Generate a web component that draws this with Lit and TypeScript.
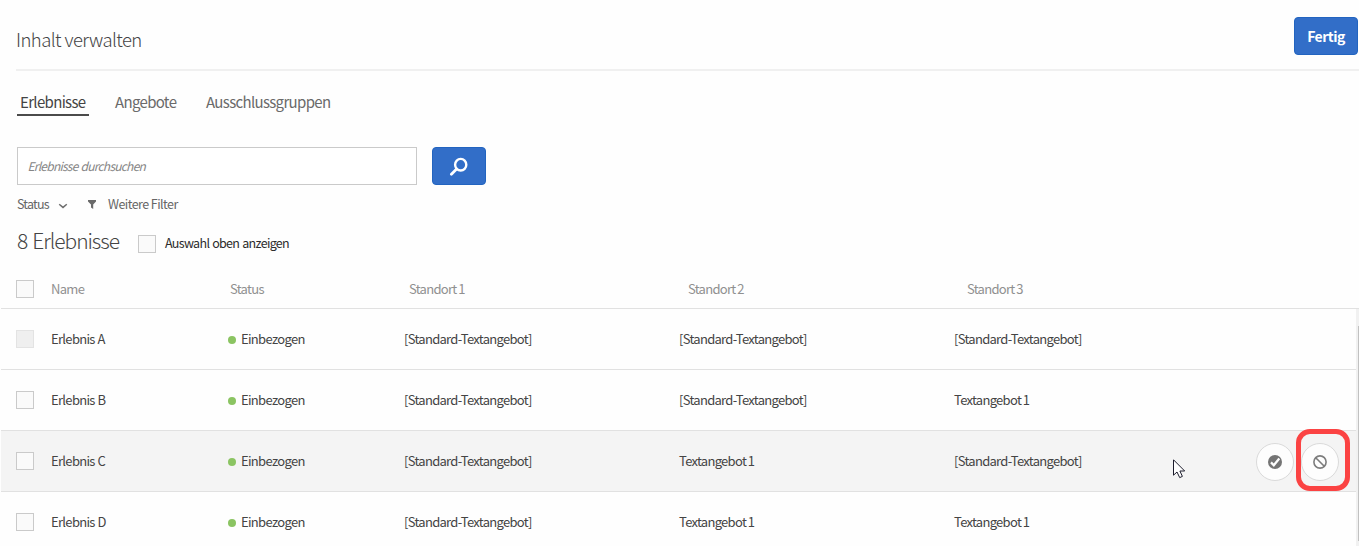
import { LitElement, html, css, svg } from "lit";
import { customElement } from "lit/decorators.js";
import { classMap } from "lit/directives/class-map.js";

interface Row {
  name: string;
  offers: string[];
  locked?: boolean;
  hovered?: boolean;
}

const STD = "[Standard-Textangebot]";
const T1 = "Textangebot 1";

const ROWS: Row[] = [
  { name: "Erlebnis A", offers: [STD, STD, STD], locked: true },
  { name: "Erlebnis B", offers: [STD, STD, T1] },
  { name: "Erlebnis C", offers: [STD, T1, STD], hovered: true },
  { name: "Erlebnis D", offers: [STD, T1, T1] },
];

const searchIcon = svg`<svg class="search-icon" width="20" height="20" viewBox="0 0 20 20">
  <ellipse cx="11.7" cy="8.7" rx="5.6" ry="5.8" fill="none" stroke="#fff" stroke-width="2.4"/>
  <path d="M7.6 13 L2.4 18.2" stroke="#fff" stroke-width="2.8" stroke-linecap="round"/>
</svg>`;

@customElement("app-root")
export class AppRoot extends LitElement {
  static styles = css`
    :host {
      display: block;
      position: relative;
      box-sizing: border-box;
      height: 546px;
      overflow: hidden;
      background: #fefefe;
      color: #444;
      font-family: "Noto Sans CJK JP", "Noto Sans", sans-serif;
      font-size: 13px;
      line-height: 20px;
      white-space: nowrap;
    }
    * { box-sizing: border-box; }
    .header {
      display: flex;
      justify-content: space-between;
      height: 71px;
      margin-left: 16px;
      padding: 17px 1px 0 0;
      border-bottom: 2px solid #f0f0f0;
    }
    .title { font-size: 18.5px; font-weight: 300; line-height: 24px; margin: 10px 0 0; letter-spacing: -0.57px; }
    .done {
      width: 64px; height: 38px; padding: 0; border: 1px solid #2264c0; border-radius: 4px;
      background: #326ec8; color: #fff; font: 700 14px/34px "Noto Sans CJK JP", sans-serif; letter-spacing: -0.5px;
    }
    .tabs { display: flex; padding: 21px 0 0 17px; height: 76px; font-size: 15px; line-height: 20px; color: #6a6a6a; }
    .tab { height: 24px; }
    .tab.active { width: 72px; padding-left: 3px; margin-right: 26px; border-bottom: 2px solid #4b4b4b; color: #444; }
    .tab.offers { width: 91px; }
    .tab span { letter-spacing: -0.67px; }
    .search { display: flex; gap: 15px; padding-left: 17px; }
    .field {
      width: 400px; height: 38px; border: 1px solid #cacaca; background: #fff; padding-left: 9.5px;
      line-height: 35px; font-size: 12px; font-style: italic; color: #858585; letter-spacing: -0.76px; word-spacing: 1px;
    }
    .go {
      display: grid; place-items: center; width: 54px; height: 38px; padding: 0;
      border: 1px solid #2264c0; border-radius: 4px; background: #326ec8;
    }
    .filters { display: flex; align-items: center; height: 20px; margin: 9px 0 0 17px; font-size: 12.5px; letter-spacing: -0.55px; color: #666; }
    .filters .lbl { width: 41px; letter-spacing: -0.8px; }
    .chev { width: 10px; margin: 4px 20px 0 0; }
    .funnel { width: 8px; margin-right: 12px; }
    .summary { display: flex; align-items: center; height: 36px; margin: 11px 0 0 17px; }
    .count { width: 121px; font-size: 21px; font-weight: 300; line-height: 28px; margin: -6px 0 0; letter-spacing: -1.05px; word-spacing: 1.5px; }
    .check { flex: none; width: 18px; height: 18px; border: 1px solid #cacaca; background: #fafafa; }
    .summary .check { margin-top: 2px; }
    .check.locked { border-color: #e3e3e3; background: #efefef; }
    .show { margin-left: 9px; font-size: 12.5px; color: #2c2c2c; letter-spacing: -0.68px; word-spacing: 0.8px; }
    .grid { display: grid; align-items: center; }
    .thead { height: 48px; border-bottom: 1px solid #e1e1e1; margin-left: 1px; }
    .head { grid-template-columns: 35px 179px 179px 279px 279px 1fr; height: 47px; padding: 9px 0 0 15px; color: #909090; }
    .body { display: flex; }
    .rows { width: 1355px; margin-left: 1px; flex: none; }
    .row { grid-template-columns: 35px 177px 176px 275px 275px 275px 1fr; height: 61px; padding-left: 15px; border-bottom: 1px solid #e1e1e1; }
    .row.hovered { background: #f4f4f4; }
    .status { display: flex; align-items: center; gap: 5px; }
    .dot { width: 8px; height: 8px; border-radius: 50%; background: #8bc462; margin-top: 2px; }
    .actions { display: flex; justify-content: flex-end; gap: 7px; padding: 2px 17px 0 0; }
    .action { flex: none; display: grid; place-items: center; width: 38px; height: 38px; border-radius: 50%; border: 1px solid #dadada; background: #fdfdfd; }
    .track { width: 3px; height: 237px; background: #f1f1f1; padding: 17px 0 0 2px; }
    .thumb { height: 215px; background: #c1c1c1; }
    .marker { position: absolute; left: 1296px; top: 429px; width: 54px; height: 62px; border: 5px solid #fb4343; border-radius: 14px; }
    .cursor { position: absolute; left: 1173px; top: 459px; }
    .txt { letter-spacing: -0.68px; }
    .name { word-spacing: 0.6px; }
    .offer { letter-spacing: -0.7px; word-spacing: -0.5px; }
  `;

  private row(r: Row) {
    return html`<div class=${classMap({ grid: true, row: true, hovered: !!r.hovered })}>
      <span class=${classMap({ check: true, locked: !!r.locked })}></span>
      <span class="txt name">${r.name}</span>
      <span class="status"><i class="dot"></i><span class="txt">Einbezogen</span></span>
      ${r.offers.map((o) => html`<span class="txt offer">${o}</span>`)}
      ${r.hovered
        ? html`<span class="actions">
            <span class="action"><svg width="14" height="14" viewBox="0 0 14 14"><circle cx="7" cy="7" r="7" fill="#747474"/><path d="M3 7.4 L5.8 10.2 L11.3 3.6" fill="none" stroke="#fdfdfd" stroke-width="2.3"/></svg></span>
            <span class="action"><svg width="14" height="14" viewBox="0 0 14 14" fill="none" stroke="#7c7c7c" stroke-width="1.6"><circle cx="7" cy="7" r="6.1"/><path d="M2.7 2.7 L11.3 11.3"/></svg></span>
          </span>`
        : ""}
    </div>`;
  }

  render() {
    return html`
      <div class="header"><h1 class="title">Inhalt verwalten</h1><button class="done">Fertig</button></div>
      <div class="tabs">
        <div class="tab active"><span>Erlebnisse</span></div>
        <div class="tab offers"><span>Angebote</span></div>
        <div class="tab"><span>Ausschlussgruppen</span></div>
      </div>
      <div class="search"><div class="field">Erlebnisse durchsuchen</div><button class="go">${searchIcon}</button></div>
      <div class="filters">
        <span class="lbl">Status</span>
        <svg class="chev" width="10" height="6" viewBox="0 0 10 6"><path d="M1.2 1.2 L5 4.4 L8.8 1.2" fill="none" stroke="#6e6e6e" stroke-width="1.5"/></svg>
        <svg class="funnel" width="8" height="9" viewBox="0 0 8 9"><path d="M0 0H8V1.6L5.2 4.6V9L3 7.6V4.6L0 1.6Z" fill="#6a6a6a"/></svg>
        <span>Weitere Filter</span>
      </div>
      <div class="summary"><h2 class="count">8 Erlebnisse</h2><span class="check"></span><span class="show">Auswahl oben anzeigen</span></div>
      <div class="thead"><div class="grid head">
        <span class="check"></span>
        ${["Name", "Status", "Standort 1", "Standort 2", "Standort 3"].map((h) => html`<span class="txt offer">${h}</span>`)}
      </div></div>
      <div class="body"><div class="rows">${ROWS.map((r) => this.row(r))}</div><div class="track"><div class="thumb"></div></div></div>
      <div class="marker"></div>
      <svg class="cursor" width="13" height="20" viewBox="0 0 13 20"><path d="M.5 .8V16.2L4 13L6.7 18.6L9.4 17.4L6.9 12H11.7Z" fill="#fff" stroke="#1c1c2c" stroke-width="1"/></svg>
    `;
  }
}
